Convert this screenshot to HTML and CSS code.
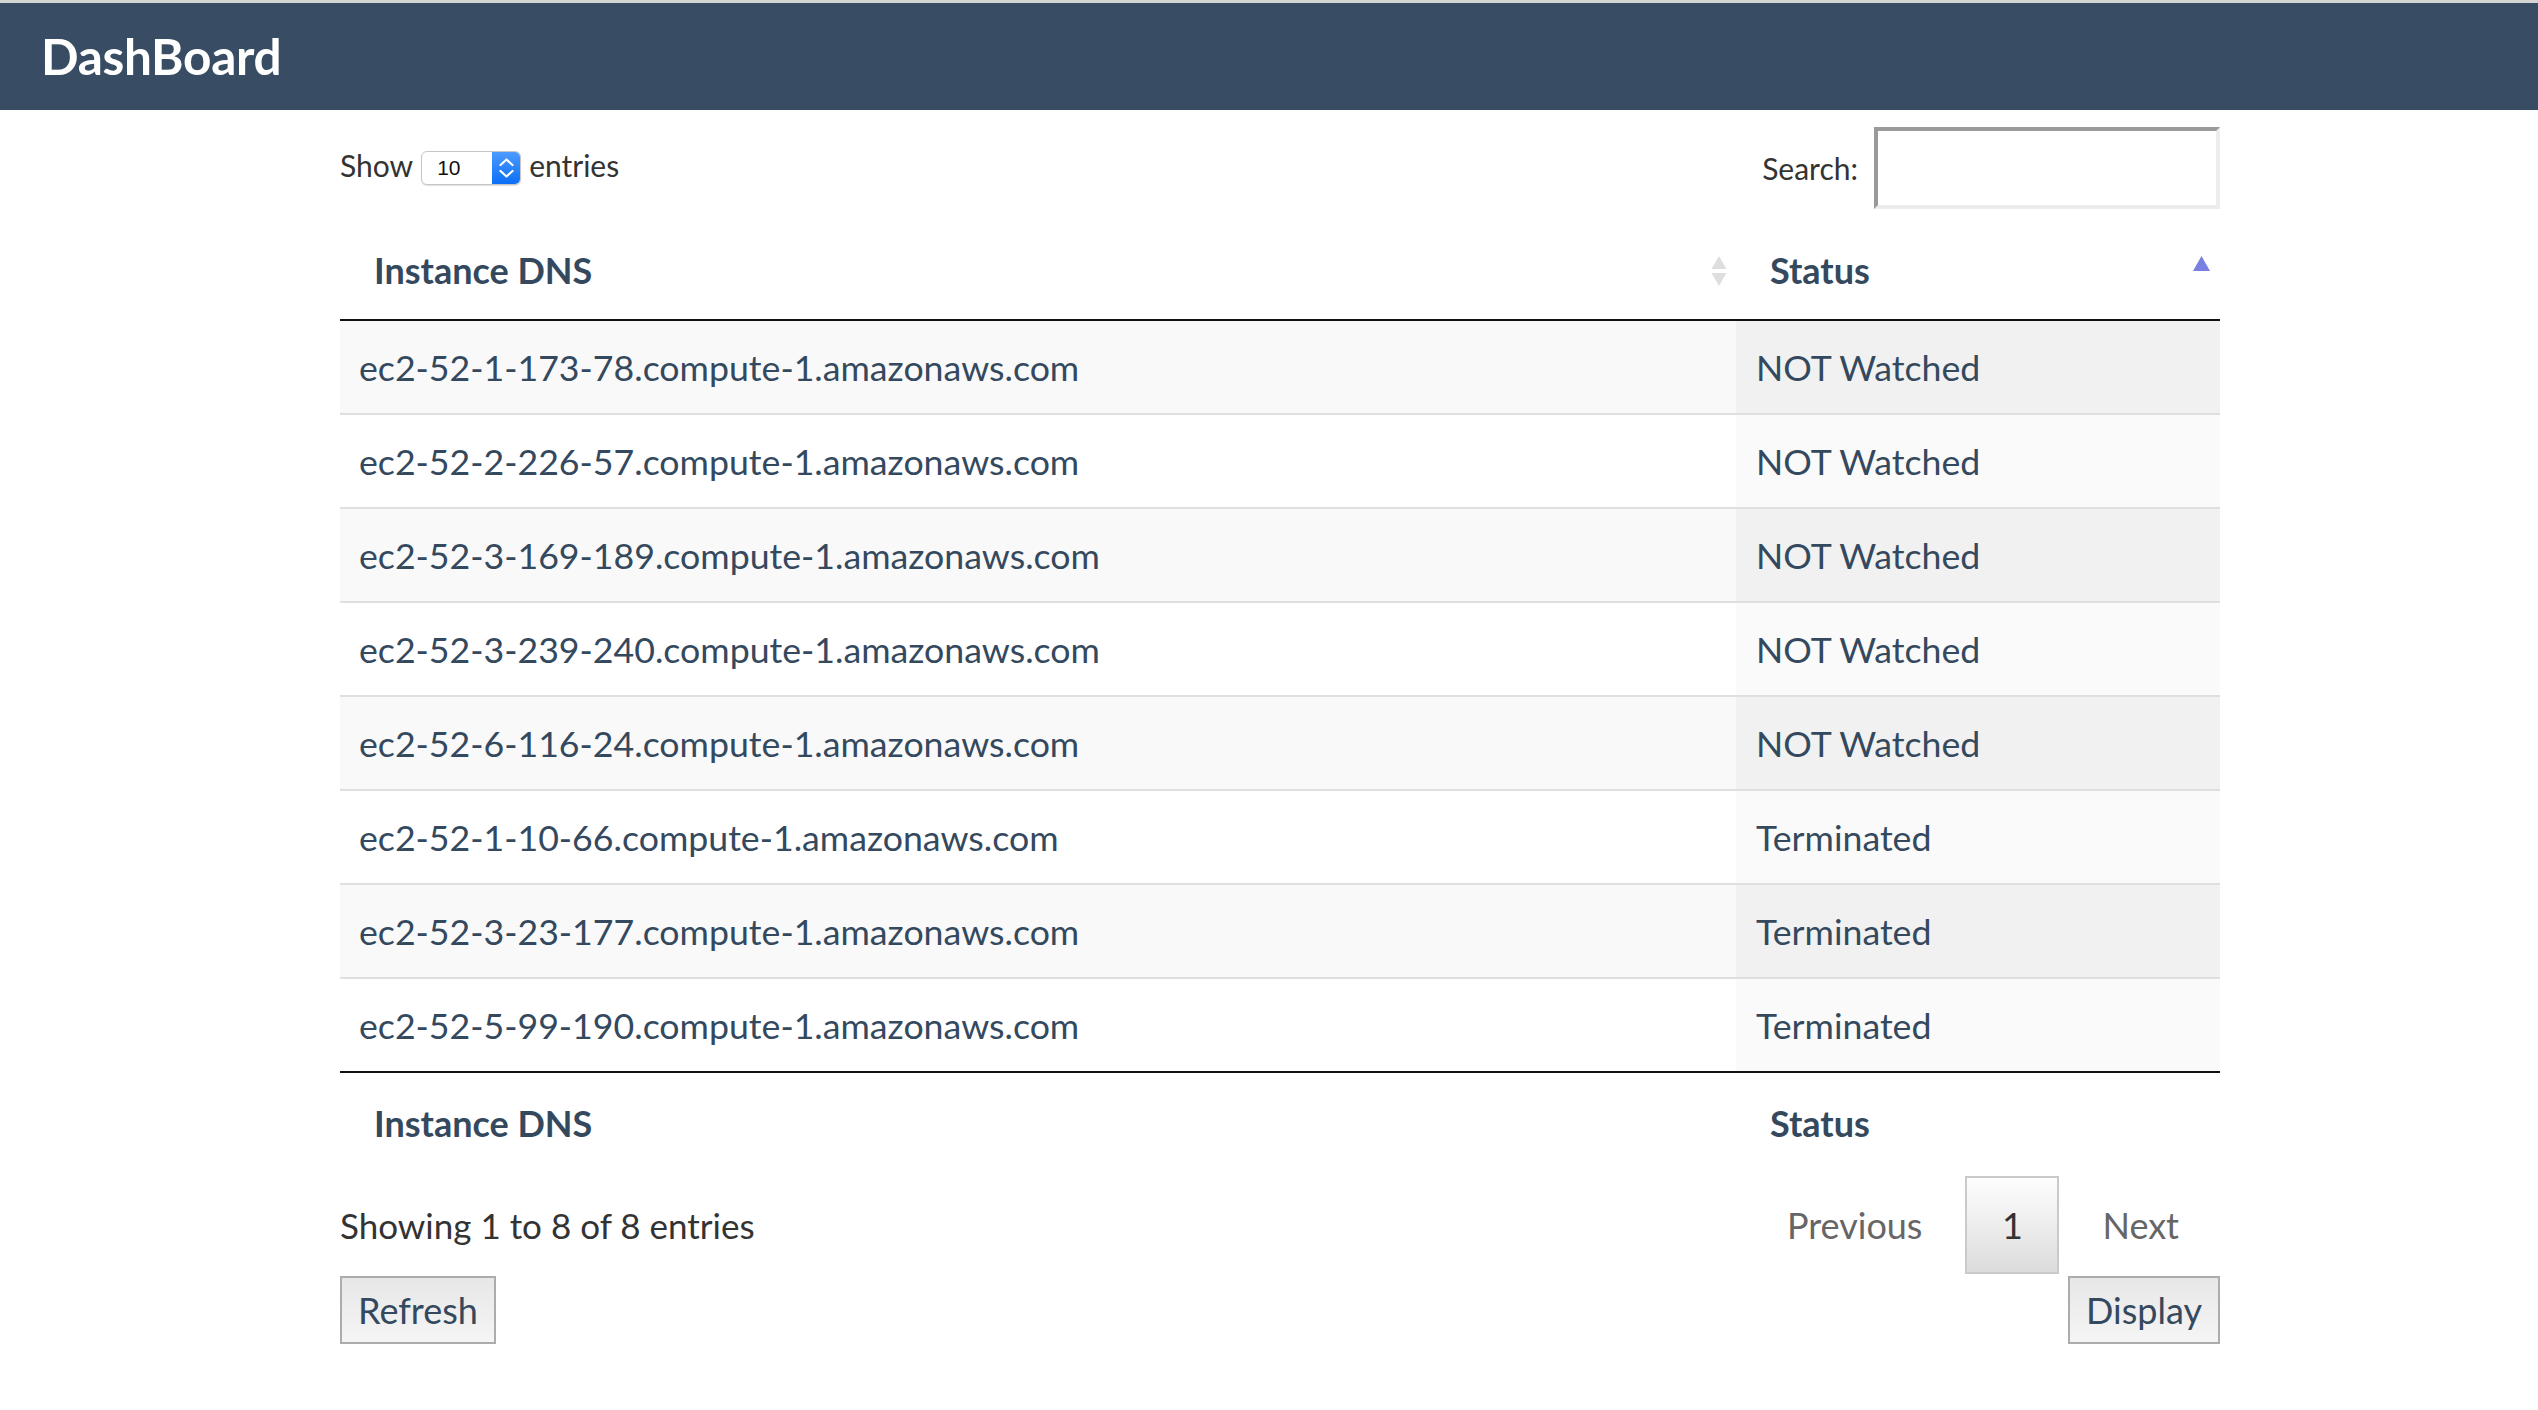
FILE: index.html
```html
<!DOCTYPE html>
<html>
<head>
<meta charset="utf-8">
<title>DashBoard</title>
<link rel="stylesheet" href="styles.css">
</head>
<body>
<header class="topbar">
  <h1 class="brand">DashBoard</h1>
</header>
<main class="wrap">
  <div class="controls">
    <div class="length">
      <span>Show</span>
      <span class="select">
        <span class="select-val">10</span>
        <span class="select-btn">
          <svg width="29" height="34" viewBox="0 0 29 34"><polyline points="8.5,14 14.5,8.5 20.5,14" fill="none" stroke="#fff" stroke-width="2.2" stroke-linecap="round" stroke-linejoin="round"/><polyline points="8.5,20 14.5,25.5 20.5,20" fill="none" stroke="#fff" stroke-width="2.2" stroke-linecap="round" stroke-linejoin="round"/></svg>
        </span>
      </span>
      <span>entries</span>
    </div>
    <div class="search">
      <span>Search:</span>
      <span class="search-input"></span>
    </div>
  </div>
  <table class="grid">
    <colgroup>
      <col class="col-dns">
      <col class="col-status">
    </colgroup>
    <thead>
      <tr>
        <th>Instance DNS<span class="sort sort-both"><svg width="16" height="31" viewBox="0 0 16 31"><polygon points="8,0 15.5,13 0.5,13" fill="#dedede"/><polygon points="8,30 15.5,17 0.5,17" fill="#dedede"/></svg></span></th>
        <th>Status<span class="sort sort-asc"><svg width="17" height="15" viewBox="0 0 17 15"><polygon points="8.5,0 17,15 0,15" fill="#7a80e2"/></svg></span></th>
      </tr>
    </thead>
    <tbody>
      <tr><td>ec2-52-1-173-78.compute-1.amazonaws.com</td><td class="sorted">NOT Watched</td></tr>
      <tr><td>ec2-52-2-226-57.compute-1.amazonaws.com</td><td class="sorted">NOT Watched</td></tr>
      <tr><td>ec2-52-3-169-189.compute-1.amazonaws.com</td><td class="sorted">NOT Watched</td></tr>
      <tr><td>ec2-52-3-239-240.compute-1.amazonaws.com</td><td class="sorted">NOT Watched</td></tr>
      <tr><td>ec2-52-6-116-24.compute-1.amazonaws.com</td><td class="sorted">NOT Watched</td></tr>
      <tr><td>ec2-52-1-10-66.compute-1.amazonaws.com</td><td class="sorted">Terminated</td></tr>
      <tr><td>ec2-52-3-23-177.compute-1.amazonaws.com</td><td class="sorted">Terminated</td></tr>
      <tr><td>ec2-52-5-99-190.compute-1.amazonaws.com</td><td class="sorted">Terminated</td></tr>
    </tbody>
    <tfoot>
      <tr><th>Instance DNS</th><th>Status</th></tr>
    </tfoot>
  </table>
  <div class="info-row">
    <div class="info">Showing 1 to 8 of 8 entries</div>
    <div class="pager">
      <span class="page-btn disabled">Previous</span>
      <span class="page-btn current">1</span>
      <span class="page-btn disabled">Next</span>
    </div>
  </div>
  <div class="actions">
    <button class="btn">Refresh</button>
    <button class="btn">Display</button>
  </div>
</main>
</body>
</html>
```
FILE: styles.css
```css
html, body {
  margin: 0;
  padding: 0;
  background: #fff;
}
body {
  font-family: Lato, "Open Sans", "Liberation Sans", sans-serif;
  color: #333;
}
.topbar {
  border-top: 3px solid #d4d4d4;
  background: #384d63;
  height: 107px;
  display: flex;
  align-items: center;
  padding-left: 41px;
}
.brand {
  margin: 0;
  color: #fff;
  font-weight: 700;
  font-size: 49.5px;
  line-height: 1;
  letter-spacing: -0.3px;
}
.wrap {
  margin-left: 340px;
  width: 1880px;
  padding-top: 17px;
}
.controls {
  display: flex;
  justify-content: space-between;
  align-items: center;
  height: 82px;
}
.length {
  display: flex;
  align-items: center;
  gap: 8px;
  font-size: 30px;
  color: #333;
}
.length > span:first-child,
.length > span:last-child {
  position: relative;
  top: -3px;
}
.select {
  display: inline-flex;
  width: 100px;
  height: 34px;
  box-sizing: border-box;
  border: 1px solid #c6c6c6;
  border-radius: 6px;
  background: #fff;
  overflow: hidden;
  box-shadow: 0 1px 1px rgba(0,0,0,0.12);
}
.select-val {
  flex: 1;
  font-family: "Liberation Sans", Arial, sans-serif;
  font-size: 21px;
  color: #111;
  line-height: 32px;
  padding-left: 15px;
}
.select-btn {
  width: 29px;
  height: 34px;
  margin-top: -1px;
  margin-right: -1px;
  background: linear-gradient(#4e9cff, #0a6df6);
  display: flex;
}
.search {
  display: flex;
  align-items: center;
  gap: 16px;
  font-size: 30px;
  color: #333;
}
.search-input {
  display: block;
  width: 346px;
  height: 82px;
  box-sizing: border-box;
  border-style: solid;
  border-width: 4px;
  border-color: #9a9a9a #ececec #ececec #9a9a9a;
  background: #fff;
}
.grid {
  width: 1880px;
  margin-top: 12px;
  border-collapse: separate;
  border-spacing: 0;
  table-layout: fixed;
}
.col-dns { width: 1396px; }
.col-status { width: 484px; }
.grid th {
  position: relative;
  padding: 0 36px 0 34px;
  text-align: left;
  font-weight: 700;
  font-size: 36px;
  color: #34495e;
  vertical-align: middle;
}
.grid thead th {
  height: 98px;
  border-bottom: 2px solid #111;
}
.grid tfoot th {
  height: 100px;
  border-top: 2px solid #111;
}
.sort {
  position: absolute;
  right: 9px;
  top: 35px;
  line-height: 0;
}
.sort-asc { right: 10px; }
.grid td {
  height: 92px;
  padding: 0 19px;
  font-size: 35.7px;
  color: #34495e;
  vertical-align: middle;
  white-space: nowrap;
  background: #fff;
}
.grid td.sorted { padding-left: 20px; }
.grid tbody tr + tr td {
  border-top: 2px solid #dfdfdf;
}
.grid tbody tr:nth-child(odd) td { background: #f9f9f9; }
.grid tbody tr:nth-child(odd) td.sorted { background: #f1f1f1; }
.grid tbody tr:nth-child(even) td.sorted { background: #fafafa; }
.info-row {
  display: flex;
  justify-content: space-between;
  align-items: center;
  margin-top: 3px;
  height: 98px;
}
.info {
  font-size: 35px;
  color: #333;
}
.pager {
  display: flex;
  align-items: stretch;
  height: 98px;
}
.page-btn {
  display: flex;
  align-items: center;
  justify-content: center;
  box-sizing: border-box;
  padding: 0 39px;
  margin-left: 2px;
  font-size: 36px;
  border: 2px solid transparent;
}
.page-btn.disabled { color: #666; }
.page-btn.current {
  width: 94px;
  padding: 0;
  color: #333;
  border-color: #cacaca;
  background: linear-gradient(#fefefe, #dcdcdc);
}
.actions {
  display: flex;
  justify-content: space-between;
  margin-top: 2px;
}
.btn {
  height: 68px;
  box-sizing: border-box;
  padding: 0 16px;
  font-family: Lato, "Open Sans", "Liberation Sans", sans-serif;
  font-size: 36px;
  color: #34495e;
  border: 2px solid #acacac;
  background: linear-gradient(#e7e7e7, #f5f5f5);
  border-radius: 0;
}
```
